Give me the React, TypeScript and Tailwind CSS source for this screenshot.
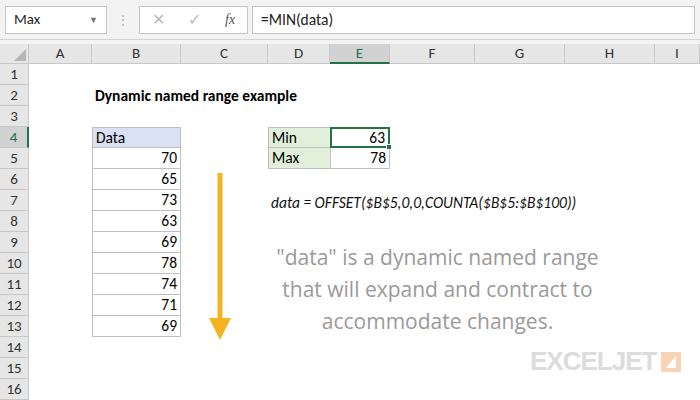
import React from 'react';

const cols = ['A', 'B', 'C', 'D', 'E', 'F', 'G', 'H', 'I'];
const data = [70, 65, 73, 63, 69, 78, 74, 71, 69];

function Cell({ children, className = '' }: { children?: React.ReactNode; className?: string }) {
  return <div className={`h-[21px] flex items-center text-[15.5px] ${className}`}>{children}</div>;
}

export default function App() {
  const rows = Array.from({ length: 16 }, (_, i) => i + 1);
  return (
    <div className="relative w-[700px] h-[400px] overflow-hidden bg-white" style={{ fontFamily: 'Calibri, Carlito, "Liberation Sans", sans-serif' }}>
      {/* formula bar */}
      <div className="h-[40px] bg-[#f3f3f3] flex items-center px-[5px] gap-0 border-b border-[#d4d4d4]">
        <div className="w-[102px] h-[28px] bg-white border border-[#c6c6c6] flex items-center justify-between px-2 text-[15px] text-[#222]">
          <span>Max</span>
          <span className="text-[#777] text-[9px]">▼</span>
        </div>
        <div className="w-[32px] flex justify-center text-[#aaa] text-[12px]">⋮</div>
        <div className="w-[109px] h-[28px] bg-white border border-[#c6c6c6] flex items-center justify-around text-[#bbb] text-[16px]">
          <span>✕</span>
          <span>✓</span>
          <span className="italic text-[#555] text-[14px]" style={{ fontFamily: '"Liberation Serif", serif' }}>fx</span>
        </div>
        <div className="flex-1 h-[28px] ml-[4px] bg-white border border-[#c6c6c6] flex items-center px-2 text-[15.5px] text-[#222]">=MIN(data)</div>
      </div>
      <div className="h-[4px] bg-[#f3f3f3]" />
      {/* grid */}
      <div className="grid grid-cols-[29px_63px_89px_87px_62px_60px_85px_90px_90px_45px]">
        <div className="h-[20px] bg-[#e6e6e6] border-r border-b border-[#c8c8c8] flex items-end justify-end">
          <div className="w-0 h-0 border-l-[12px] border-l-transparent border-b-[12px] border-b-[#b5b5b5] mr-[2px] mb-[2px]" />
        </div>
        {cols.map((c) => (
          <div key={c} className={`h-[20px] flex items-center justify-center text-[15px] border-r border-[#c8c8c8] ${c === 'E' ? 'bg-[#d2d2d2] border-b-2 border-b-[#217346] text-[#217346]' : 'bg-[#e6e6e6] border-b border-b-[#c8c8c8] text-[#333]'}`}>{c}</div>
        ))}
        {rows.map((r) => {
          const d = r >= 5 && r <= 13 ? data[r - 5] : null;
          return (
            <React.Fragment key={r}>
              <Cell className={`justify-center border-r border-b border-[#c8c8c8] text-[#333] text-[15px] ${r === 4 ? 'bg-[#d2d2d2] border-r-2 border-r-[#217346] text-[#217346]' : 'bg-[#e6e6e6]'}`}>{r}</Cell>
              <Cell />
              {r === 2 ? (
                <Cell className="font-bold whitespace-nowrap pl-[3px] overflow-visible">Dynamic named range example</Cell>
              ) : r === 4 ? (
                <Cell className="bg-[#d9e1f2] border border-[#bfbfbf] pl-[3px]">Data</Cell>
              ) : d !== null ? (
                <Cell className="justify-end pr-[3px] border-x border-b border-[#bfbfbf]">{d}</Cell>
              ) : (
                <Cell />
              )}
              <Cell />
              {r === 4 || r === 5 ? (
                <>
                  <Cell className={`bg-[#e2efda] border-l border-b border-[#bfbfbf] pl-[3px] ${r === 4 ? 'border-t' : ''}`}>{r === 4 ? 'Min' : 'Max'}</Cell>
                  {r === 4 ? (
                    <Cell className="relative justify-end pr-[3px] border-2 border-[#217346]">
                      63
                      <div className="absolute -right-[4px] -bottom-[4px] w-[6px] h-[6px] bg-[#217346] border border-white" />
                    </Cell>
                  ) : (
                    <Cell className="justify-end pr-[3px] border-x border-b border-[#bfbfbf]">78</Cell>
                  )}
                </>
              ) : (
                <>
                  <Cell />
                  <Cell />
                </>
              )}
              <Cell />
              <Cell />
              <Cell />
              <Cell />
            </React.Fragment>
          );
        })}
      </div>
      {/* overlays */}
      <div className="absolute left-[271px] top-[191px] italic text-[15.5px] text-[#111] whitespace-nowrap">data = OFFSET($B$5,0,0,COUNTA($B$5:$B$100))</div>
      <div className="absolute left-[255px] top-[241px] w-[365px] text-center text-[21px] leading-[32px] text-[#9a9a9a]" style={{ fontFamily: '"Comic Sans MS", "Open Sans", sans-serif' }}>
        "data" is a dynamic named range<br />that will expand and contract to<br />accommodate changes.
      </div>
      <svg className="absolute left-[209px] top-[173px]" width="22" height="168" viewBox="0 0 22 168">
        <rect x="8.5" y="0" width="5" height="150" fill="#f5b324" />
        <polygon points="0,145 22,145 11,167" fill="#f5b324" />
      </svg>
      <div className="absolute left-[530px] top-[342px] flex items-center gap-[5px]">
        <span className="text-[26px] font-black tracking-[-1px] text-[#dcdcdc]" style={{ fontFamily: '"Liberation Sans", Arial, sans-serif' }}>EXCELJET</span>
        <svg width="20" height="20" viewBox="0 0 20 20">
          <rect width="20" height="20" fill="#f9d3b5" />
          <polygon points="15,4 15,16 5,16" fill="#fff" />
        </svg>
      </div>
    </div>
  );
}
